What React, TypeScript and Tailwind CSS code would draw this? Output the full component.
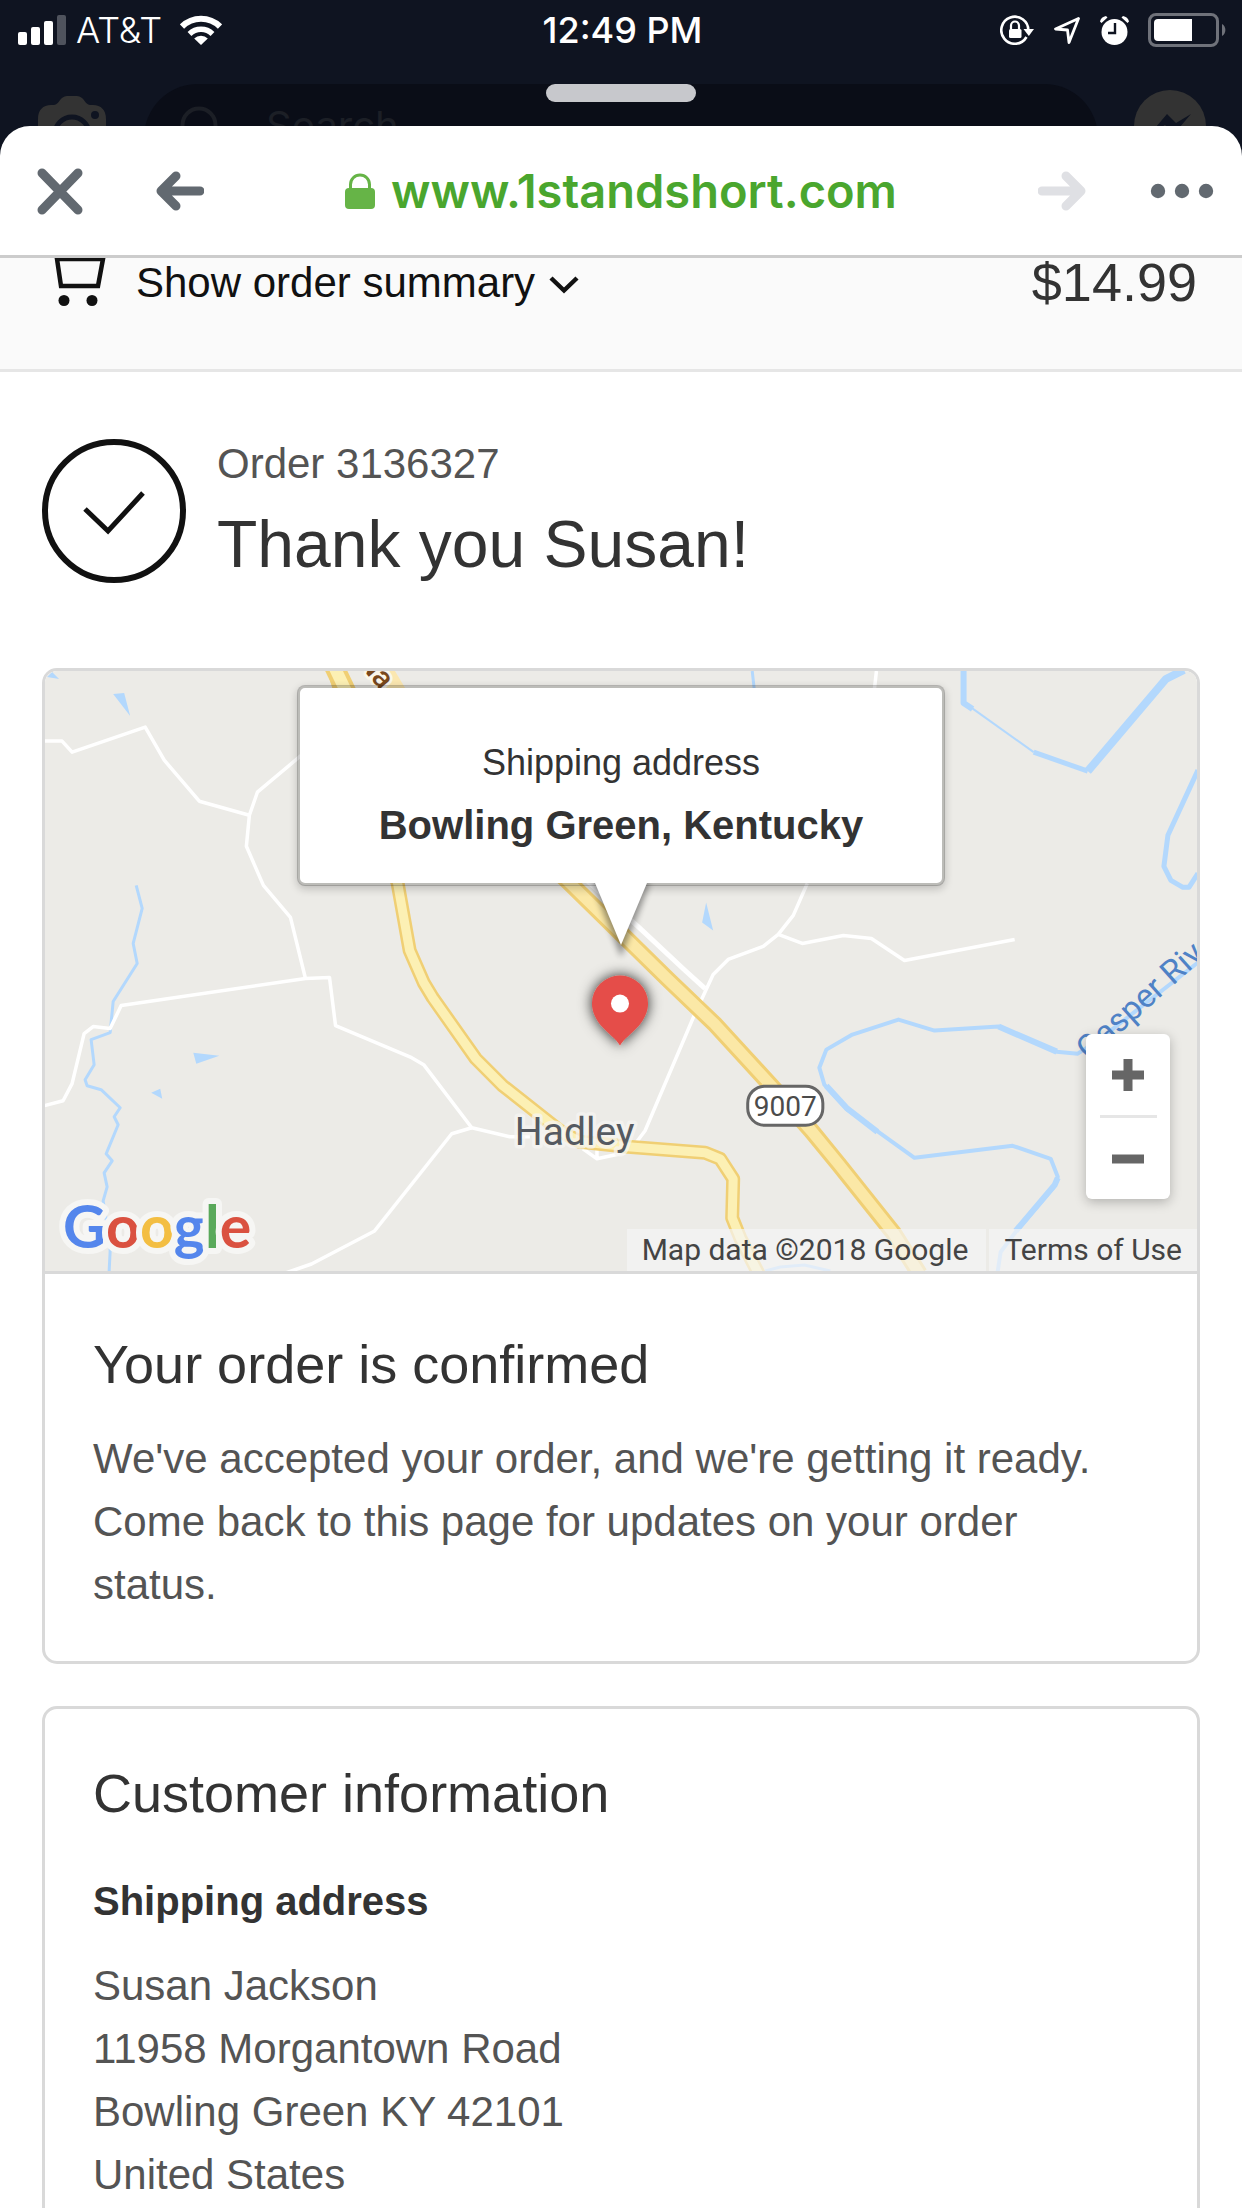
const WATER = "#b3d8fd";

const address = [
  "Susan Jackson",
  "11958 Morgantown Road",
  "Bowling Green KY 42101",
  "United States",
];

function StatusBar() {
  return (
    <div className="grid h-[60px] shrink-0 grid-cols-3 items-center pl-[18px] pr-[15px] text-white font-['Inter',sans-serif]">
      <div className="flex items-center gap-[10px]">
        <svg width="48" height="30" viewBox="0 0 48 30" fill="currentColor">
          <rect x="0" y="17" width="9" height="13" rx="2" />
          <rect x="13" y="12" width="9" height="18" rx="2" />
          <rect x="26" y="6" width="9" height="24" rx="2" />
          <rect x="39" y="0" width="9" height="30" rx="2" opacity="0.27" />
        </svg>
        <span className="text-[36px] font-light leading-[42px]">AT&amp;T</span>
        <svg className="ml-2" width="42" height="30" viewBox="0 0 42 30" fill="none" stroke="currentColor" strokeWidth="6">
          <path d="M2 11.5a27 27 0 0 1 38 0" />
          <path d="M9.5 19a16.500 16.500 0 0 1 23 0" strokeWidth="5.500" />
          <path d="M21 30l-6.800-6.500a9.500 9.500 0 0 1 13.600 0z" fill="currentColor" stroke="none" />
        </svg>
      </div>
      <time className="text-center text-[36px] font-medium leading-[42px]">12:49 PM</time>
      <div className="flex items-center justify-end gap-[19px]">
        <svg width="34" height="30" viewBox="0 0 34 30" fill="none" stroke="currentColor" strokeWidth="2.600">
          <path d="M28.300 15.500A13.500 13.500 0 1 0 26.500 22" />
          <path d="M23.500 14H34l-5.200 7z" fill="currentColor" stroke="none" />
          <path d="M11 14v-3.500a4 4 0 0 1 8 0V14" strokeWidth="2.200" />
          <rect x="9" y="14" width="12.500" height="9" rx="1.500" fill="currentColor" stroke="none" />
        </svg>
        <svg width="28" height="28" viewBox="0 0 28 28" fill="none" stroke="currentColor" strokeWidth="2.800" strokeLinejoin="round">
          <path d="M25.500 2.500L2.500 13l12 1 1.500 12.500z" />
        </svg>
        <svg width="29" height="29" viewBox="0 0 29 29">
          <circle cx="14.500" cy="16" r="13" fill="#fff" />
          <path d="M0 5.500C.500 2.500 3 .500 6 0L7.500 1.500 1.500 7zM29 5.500C28.500 2.500 26 .500 23 0l-1.500 1.500L27.500 7z" fill="#fff" />
          <path d="M15 7v10H8" fill="none" stroke="#0f1421" strokeWidth="2.400" />
        </svg>
        <svg width="79" height="34" viewBox="0 0 79 34">
          <rect x="1.500" y="1.500" width="68" height="31" rx="6.500" fill="none" stroke="#6f727a" strokeWidth="3" />
          <path d="M10 6h34v22H10a4 4 0 0 1-4-4V10a4 4 0 0 1 4-4z" fill="#fff" />
          <path d="M74 11a7 7 0 0 1 0 12z" fill="#6f727a" />
        </svg>
      </div>
    </div>
  );
}

// the feed header that stays dimmed behind the browser sheet
function DimmedHeader() {
  return (
    <div className="relative h-[66px] shrink-0 overflow-hidden pt-6">
      <div className="flex items-start px-[36px]">
        <svg className="mt-3 shrink-0" width="72" height="56" viewBox="0 0 72 56">
          <path
            d="M2 56V23C2 14 7 9 15 9h3c5 0 6-9 13-9h10c7 0 8 9 13 9h3c8 0 13 5 13 14v33z"
            fill="#333"
          />
          <circle cx="36" cy="38" r="17" fill="#333" stroke="#0f1421" strokeWidth="5" />
          <circle cx="59" cy="19" r="4" fill="#0f1421" />
        </svg>
        <div className="ml-[36px] mr-[36px] flex h-[108px] grow items-start gap-[44px] rounded-full bg-[#0a0d17] pl-[36px] pt-[18px] text-[#1c1f26]">
          <svg className="mt-1 shrink-0" width="42" height="42" viewBox="0 0 42 42" fill="none" stroke="currentColor" strokeWidth="4">
            <circle cx="19" cy="19" r="16.500" />
          </svg>
          <span className="text-[40px] leading-[48px] font-['Inter',sans-serif]">Search</span>
        </div>
        <svg className="mt-[6px] shrink-0" width="72" height="72" viewBox="0 0 72 72">
          <circle cx="36" cy="36" r="36" fill="#333" />
          <path d="M16 44l17-20 9 9 15-9-17 20-9-9z" fill="#0f1421" />
        </svg>
      </div>
      <div className="absolute left-1/2 top-6 h-[18px] w-[150px] -translate-x-1/2 rounded-full bg-[#c7c8cc]" />
    </div>
  );
}

function BrowserBar() {
  return (
    <header className="flex h-[132px] shrink-0 items-center justify-between border-b-[3px] border-[#ccc] px-[28px] text-[#626970]">
      <div className="flex items-center gap-[64px]">
        <button aria-label="Close" className="p-2">
          <svg width="48" height="48" viewBox="0 0 48 48" fill="none" stroke="currentColor" strokeWidth="9" strokeLinecap="round">
            <path d="M6 6l36 37M42 6L6 43" />
          </svg>
        </button>
        <button aria-label="Back">
          <svg width="48" height="40" viewBox="0 0 48 40" fill="none" stroke="currentColor" strokeWidth="9" strokeLinecap="round" strokeLinejoin="round">
            <path d="M44 20H6M20 5L5 20l15 15" />
          </svg>
        </button>
      </div>
      <div className="flex items-center gap-[16px] text-[#4aa62e]">
        <svg width="30" height="36" viewBox="0 0 30 36">
          <path d="M5.500 17v-5.500a9.500 9.500 0 0 1 19 0V17" fill="none" stroke="#66b447" strokeWidth="3" />
          <rect y="15" width="30" height="21" rx="4" fill="#66b447" />
        </svg>
        <a href="#" className="text-[47px] font-semibold leading-[60px] font-['Inter',sans-serif]">www.1standshort.com</a>
      </div>
      <div className="flex items-center gap-[64px]">
        <button aria-label="Forward" disabled className="text-[#dfe0e4]">
          <svg width="48" height="40" viewBox="0 0 48 40" fill="none" stroke="currentColor" strokeWidth="9" strokeLinecap="round" strokeLinejoin="round">
            <path d="M4 20h38M28 5l15 15-15 15" />
          </svg>
        </button>
        <button aria-label="More">
          <svg width="64" height="16" viewBox="0 0 64 16" fill="currentColor">
            <circle cx="8" cy="8" r="7.200" />
            <circle cx="32" cy="8" r="7.200" />
            <circle cx="56" cy="8" r="7.200" />
          </svg>
        </button>
      </div>
    </header>
  );
}

function OrderSummary() {
  return (
    <div className="-mt-[62px] flex items-center justify-between border-b-[3px] border-[#e6e6e6] bg-[#fafafa] py-[55px] pl-[51px] pr-[45px]">
      <button className="flex items-center text-[42px] leading-[63px] text-[#111]">
        <svg className="mr-[25px]" width="60" height="62" viewBox="0 0 60 62" fill="none" stroke="currentColor" strokeWidth="4.500">
          <path d="M6 7l4 27h37l5-27z" />
          <circle cx="13" cy="48.500" r="5.500" fill="currentColor" stroke="none" />
          <circle cx="41" cy="48.500" r="5.500" fill="currentColor" stroke="none" />
        </svg>
        Show order summary
        <svg className="ml-[14px] mt-1" width="30" height="18" viewBox="0 0 30 18" fill="none" stroke="currentColor" strokeWidth="4.500">
          <path d="M2 2l13 12.500L28 2" />
        </svg>
      </button>
      <span className="text-[54px] leading-[63px] text-[#333]">$14.99</span>
    </div>
  );
}

function MapDrawing() {
  return (
    <svg
      className="absolute inset-0 h-full w-full font-['Roboto',sans-serif]"
      viewBox="45 671 1152 599"
      preserveAspectRatio="xMidYMid slice"
      fill="none"
      strokeLinejoin="round"
    >
      <defs>
        <filter id="pinShadow" x="-50%" y="-50%" width="200%" height="200%">
          <feDropShadow dx="0" dy="0" stdDeviation="7" floodColor="#000" floodOpacity="0.85" />
        </filter>
      </defs>
      <rect x="45" y="671" width="1152" height="599" fill="#ecebe7" />

      {/* water */}
      <g stroke={WATER} strokeWidth="3">
        <path d="M137 885l6 23-9 35 4 20-24 38-3 31-19 7 3 25-9 15 2 6 14 4 19 18-6 9 4 8-12 29 6 7-8 12 3 14-4 14 6 36 1 14-1 20" />
        <path d="M752 671l2 18M765 1270l15-4 24-2 26 6" />
        <path d="M963 671v32l9 6" strokeWidth="6" />
        <path d="M970 707l63 45" strokeWidth="2" />
        <path d="M1033 752l54 19" strokeWidth="5" />
        <path d="M1087 771l78-92 18-9" strokeWidth="8" />
        <path d="M1197 770l-30 65-4 31 7 14 12 7h6l9-14" strokeWidth="5" />
        <path d="M1197 962l-100 78-20 13-21-2-58-25-64 4-36-11-46 15-26 15-7 18 5 17 23 25 67 48 98-12 38 13 7 18-3 9-39 46-15 20-3 20" strokeWidth="4" />
        <path d="M1057 1177l-3 7-39 46M826 1085l21 23 30 23M998 1026l58 25" strokeWidth="6" />
      </g>
      <g fill={WATER}>
        <path d="M48 677l5-5 7 7zM114 694l11-1 6 23zM194 1052l26 3-23 8zM152 1092l9-4 2 10zM706 902l-4 20 11 8z" />
      </g>

      {/* local roads */}
      <g stroke="#fff" strokeWidth="3.500">
        <path d="M45 741h18l10 11 73-25 19 33 35 41 50 14" />
        <path d="M302 755l-44 37-8 23-3 31 17 39 27 32 15 61" />
        <path d="M45 1105l19-5 9-17 12-50 9-7 17 2 11-23 184-27 24-1 6 48 76 32 12 7 48 63 38 9h20" />
        <path d="M472 1127l-20 6-77 97-63 33-26 9" />
        <path d="M583 1148l14 10 28-6M597 1158v-14" />
        <path d="M876 671l-2 18M807 883l-14 32-15 19-15 12-35 13-15 15-19 41-49 115-9 12" />
        <path d="M778 934l24 9 41-8 28 3 33 22 110-21" />
        <path d="M578 872l62 56 45 42 20 18" strokeWidth="5" />
      </g>

      {/* highways: darker casing under the fill */}
      <path d="M332 661l66 222 12 67 14 32 9 15 43 61 27 27 57 45 20 11 48 5 77 6 15 6 13 20-1 39 8 20 20 39" stroke="#f0cf74" strokeWidth="14" />
      <path d="M332 661l66 222 12 67 14 32 9 15 43 61 27 27 57 45 20 11 48 5 77 6 15 6 13 20-1 39 8 20 20 39" stroke="#fcf0b4" strokeWidth="9" />
      <path d="M332 661l22 46" stroke="#f0cf74" strokeWidth="20" />
      <path d="M332 661l22 46" stroke="#fcf0b4" strokeWidth="12" />
      <path d="M560 873l108 106 46 44 57 62 40 45 27 33 55 69 26 41" stroke="#f0cf74" strokeWidth="17" />
      <path d="M560 873l108 106 46 44 57 62 40 45 27 33 55 69 26 41" stroke="#fbe8a6" strokeWidth="11" />
      <path d="M380 661l24 40" stroke="#fbe7b0" strokeWidth="16" />
      <text transform="translate(357 662) rotate(50)" fontSize="30" fontWeight="500" fill="#78481c" stroke="#faf6ea" strokeWidth="6" paintOrder="stroke">Na</text>

      {/* labels */}
      <text x="515" y="1144" fontSize="39" fill="#555a61" stroke="#f6f5f2" strokeOpacity="0.75" strokeWidth="7" paintOrder="stroke">Hadley</text>
      <text transform="translate(1088 1061) rotate(-42)" fontSize="33" fill="#4f82c6">Gasper River</text>
      <rect x="747.500" y="1085.500" width="75" height="39" rx="17" fill="#fff" stroke="#666" strokeWidth="3" />
      <text x="785" y="1115" fontSize="28" textAnchor="middle" fill="#4b4b4b">9007</text>

      {/* pin */}
      <path
        d="M620 1045c-4-7-12-12-19-20-5-6-9-14-9-22a28 28 0 0 1 56 0c0 8-4 16-9 22-7 8-15 13-19 20z"
        fill="#e54d48"
        filter="url(#pinShadow)"
      />
      <circle cx="620" cy="1003" r="9" fill="#fff" />

      <text x="64" y="1247" fontSize="59" fontWeight="700" stroke="#f6f6f4" strokeWidth="12" paintOrder="stroke" className="font-['Lato',sans-serif]">
        <tspan fill="#5486ec">G</tspan>
        <tspan fill="#da5140">o</tspan>
        <tspan fill="#f3be42">o</tspan>
        <tspan fill="#5486ec">g</tspan>
        <tspan fill="#5aa95b">l</tspan>
        <tspan fill="#da5140">e</tspan>
      </text>
    </svg>
  );
}

function ShippingMap() {
  return (
    <div className="relative h-[603px] overflow-hidden rounded-t-[12px] border-b-[3px] border-[#d9d9d9]">
      <MapDrawing />
      <div className="absolute left-1/2 top-[14px] w-[648px] -translate-x-1/2 rounded-[8px] border-[3px] border-black/20 bg-white bg-clip-padding pb-[27px] pt-[48px] text-center text-[#333] shadow-[0_3px_9px_rgba(0,0,0,0.2)]">
        <p className="text-[36px] leading-[54px]">Shipping address</p>
        <p className="mt-[4px] text-[40px] font-bold leading-[62px]">Bowling Green, Kentucky</p>
        <svg className="absolute left-1/2 top-full -translate-x-1/2" width="70" height="78" viewBox="0 0 70 78">
          <path d="M6 0h58L35 74z" fill="#000" opacity="0.4" className="blur-[3px]" />
          <path d="M9 0h52L35 62z" fill="#fff" />
        </svg>
      </div>
      <div className="absolute bottom-[72px] right-[27px] flex w-[84px] flex-col items-center rounded-[6px] bg-white text-[#666] shadow-[0_3px_12px_rgba(0,0,0,0.25)]">
        <button aria-label="Zoom in" className="flex h-[81px] w-full items-center justify-center">
          <svg width="32" height="32" viewBox="0 0 32 32" stroke="currentColor" strokeWidth="9">
            <path d="M0 16h32M16 0v32" />
          </svg>
        </button>
        <div className="h-[3px] w-[57px] bg-[#e6e6e6]" />
        <button aria-label="Zoom out" className="flex h-[81px] w-full items-center justify-center">
          <svg width="32" height="32" viewBox="0 0 32 32" stroke="currentColor" strokeWidth="9">
            <path d="M0 16h32" />
          </svg>
        </button>
      </div>
      <div className="absolute bottom-0 right-0 flex gap-[3px] text-[30px] leading-[42px] text-[#444] font-['Roboto',sans-serif]">
        <span className="bg-[#f5f5f5]/70 pl-[15px] pr-[18px]">Map data ©2018 Google</span>
        <a href="#" className="bg-[#f5f5f5]/70 px-[15px]">Terms of Use</a>
      </div>
    </div>
  );
}

function App() {
  return (
    <div className="flex h-screen flex-col overflow-hidden bg-[#0f1421] font-['Liberation_Sans',Arial,sans-serif]">
      <StatusBar />
      <DimmedHeader />
      <div className="flex min-h-0 grow flex-col overflow-hidden rounded-t-[30px] bg-white">
        <BrowserBar />
        <main className="min-h-0 grow overflow-hidden">
          <OrderSummary />
          <div className="px-[42px]">
            <div className="flex items-center gap-[31px] pb-[79px] pt-[60px]">
              <svg className="shrink-0" width="144" height="144" viewBox="0 0 144 144" fill="none" stroke="#111">
                <circle cx="72" cy="72" r="69" strokeWidth="6" />
                <path d="M43 70l23 22 35-38" strokeWidth="5" />
              </svg>
              <div>
                <p className="text-[42px] leading-[63px] text-[#545454]">Order 3136327</p>
                <h1 className="mt-[4px] text-[66px] leading-[90px] text-[#333]">Thank you Susan!</h1>
              </div>
            </div>

            <section className="rounded-[15px] border-[3px] border-[#d9d9d9]">
              <ShippingMap />
              <div className="px-[48px] pb-[45px] pt-[55px]">
                <h2 className="text-[54px] leading-[70px] text-[#333]">Your order is confirmed</h2>
                <p className="mt-[28px] text-[42px] leading-[63px] text-[#545454]">
                  We've accepted your order, and we're getting it ready. Come back to this page for updates on your
                  order status.
                </p>
              </div>
            </section>

            <section className="mt-[42px] rounded-[15px] border-[3px] border-[#d9d9d9] px-[48px] pb-[48px] pt-[49px]">
              <h2 className="text-[54px] leading-[70px] text-[#333]">Customer information</h2>
              <h3 className="mt-[42px] text-[40px] font-bold leading-[63px] text-[#333]">Shipping address</h3>
              <address className="mt-[21px] text-[42px] not-italic leading-[63px] text-[#545454]">
                {address.map((line) => (
                  <div key={line}>{line}</div>
                ))}
              </address>
            </section>
          </div>
        </main>
      </div>
    </div>
  );
}

export default App;
